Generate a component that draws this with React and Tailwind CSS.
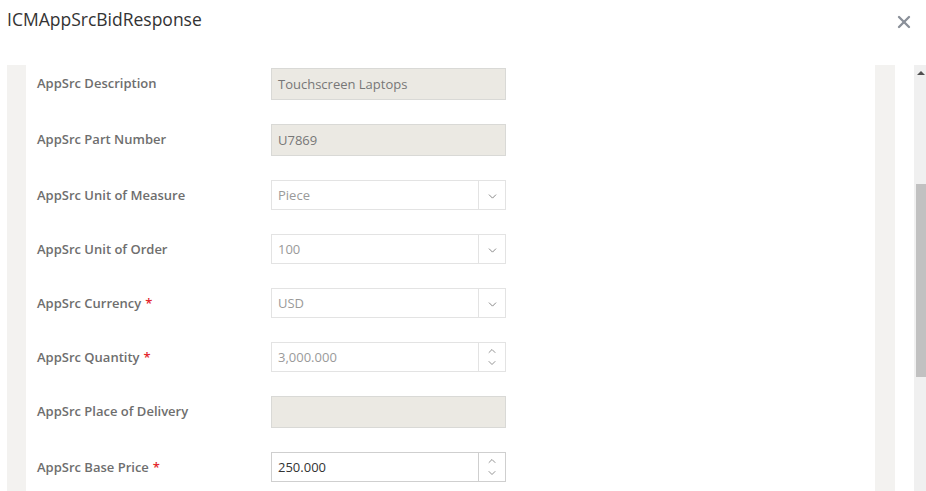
import { ChevronDown, ChevronUp, X } from "lucide-react";

// form rows shown in the bid response dialog
const FIELDS = [
    { label: "AppSrc Description", type: "readonly", value: "Touchscreen Laptops" },
    { label: "AppSrc Part Number", type: "readonly", value: "U7869" },
    { label: "AppSrc Unit of Measure", type: "select", value: "Piece" },
    { label: "AppSrc Unit of Order", type: "select", value: "100" },
    { label: "AppSrc Currency", type: "select", value: "USD", required: true },
    { label: "AppSrc Quantity", type: "number", value: "3,000.000", required: true, muted: true },
    { label: "AppSrc Place of Delivery", type: "readonly", value: "" },
    { label: "AppSrc Base Price", type: "number", value: "250.000", required: true },
];

function Field({ field }) {
    if (field.type === "readonly") {
        return (
            <div className="w-[235px] h-8 bg-[#ebe9e3] border border-[#d9d9d6] flex items-center px-[6px] pt-[1px] text-[13px] text-[#777]">
                {field.value}
            </div>
        );
    }

    const border = field.muted || field.type === "select" ? "border-[#e3e3e3]" : "border-[#cfcfcf]";
    const text = field.muted || field.type === "select" ? "text-[#9a9a9a]" : "text-[#333]";

    return (
        <div className={`w-[235px] h-[30px] bg-white border ${border} flex`}>
            <div className={`flex-1 flex items-center px-[6px] pt-[1px] text-[13px] ${text}`}>{field.value}</div>
            <div className={`w-[27px] border-l ${border} flex flex-col items-center justify-center`}>
                {field.type === "select" ? (
                    <ChevronDown size={13} strokeWidth={1.6} className="text-[#777] mt-[3px]" />
                ) : (
                    <>
                        <ChevronUp size={12} strokeWidth={1.6} className="text-[#777]" />
                        <ChevronDown size={12} strokeWidth={1.6} className="text-[#777]" />
                    </>
                )}
            </div>
        </div>
    );
}

export default function App() {
    return (
        <div className="w-[926px] h-[491px] bg-white overflow-hidden flex flex-col" style={{ fontFamily: '"Open Sans", sans-serif' }}>
            {/* Header */}
            <div className="h-[65px] flex items-start justify-between pl-[7px] pr-[12px] pt-[6px]">
                <h1 className="text-[17.5px] text-[#333]">ICMAppSrcBidResponse</h1>
                <X size={20} strokeWidth={2.8} className="text-[#8a9099] mt-[6px]" />
            </div>

            {/* Body */}
            <div className="flex-1 flex min-h-0">
                <div className="w-[19px] ml-[7px] bg-[#f3f2f0]" />
                <div className="w-[849px] pl-[11px] pt-[3px]">
                    {FIELDS.map((field) => (
                        <div key={field.label} className="flex items-start mb-6">
                            <div className="w-[234px] h-[30px] pt-[2px] flex items-center text-[13px] font-semibold text-[#6e6e6e]">
                                {field.label}
                                {field.required && <span className="text-[#e3272d] ml-1">*</span>}
                            </div>
                            <Field field={field} />
                        </div>
                    ))}
                </div>
                <div className="w-[20px] bg-[#f3f2f0]" />
                <div className="w-[19px]" />
                {/* scrollbar */}
                <div className="w-[12px] bg-[#f0f0f0] relative">
                    <div className="absolute left-[3px] top-[6px] w-0 h-0 border-l-[4px] border-r-[4px] border-b-[4px] border-l-transparent border-r-transparent border-b-[#505050]" />
                    <div className="absolute left-[2px] right-0 top-[119px] h-[193px] bg-[#c1c1c1]" />
                </div>
            </div>
        </div>
    );
}
